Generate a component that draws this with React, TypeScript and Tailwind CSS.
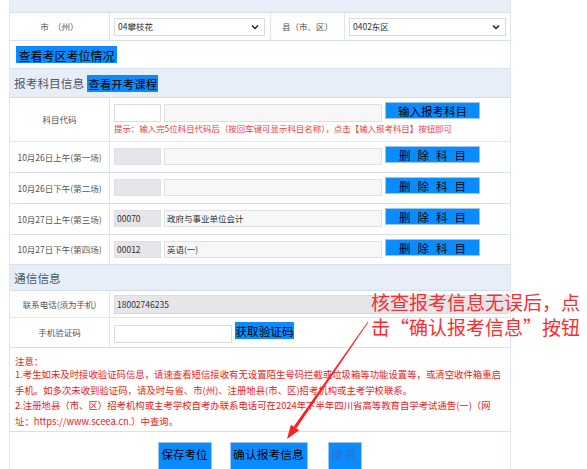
import React from "react";

const BLUE = "bg-[#0a8cff]";

function Chevron() {
  return (
    <svg width="8" height="6" viewBox="0 0 8 6" className="shrink-0">
      <polyline points="1,1.5 4,4.5 7,1.5" fill="none" stroke="#222" strokeWidth="1.5" />
    </svg>
  );
}

function Select({ value, w }: { value: string; w: string }) {
  return (
    <div className={`${w} h-[18px] border border-[#dcdcdc] bg-white flex items-center justify-between pl-[3px] pr-[5px]`}>
      <span className="text-[8.5px] text-[#333] leading-none">{value}</span>
      <Chevron />
    </div>
  );
}

function Label({ children }: { children: React.ReactNode }) {
  return (
    <div className="w-[100px] shrink-0 border-r border-[#dde6f2] flex items-center justify-center text-[8.5px] text-[#555] whitespace-nowrap">
      {children}
    </div>
  );
}

function BlueBtn({ children, cls }: { children: React.ReactNode; cls: string }) {
  return (
    <div className={`${BLUE} ${cls} border border-[#9fc6ee] text-black whitespace-nowrap text-center`}>
      {children}
    </div>
  );
}

function CourseRow({ label, code, name, h }: { label: string; code: string; name: string; h: string }) {
  return (
    <div className={`flex ${h} border-b border-[#d6e1ef]`}>
      <Label>{label}</Label>
      <div className="flex items-start pl-[4px] pt-[4px] gap-[3px]">
        <div className="mt-[2px] w-[47px] h-[17px] bg-[#e6e6ea] border border-[#e0e0e4] flex items-center pl-[2px] text-[8.5px] text-[#333]">{code}</div>
        <div className="mt-[2px] w-[218px] h-[17px] bg-[#f7f7f7] border border-[#e0e0e0] flex items-center pl-[2px] text-[8.5px] text-[#333]">{name}</div>
        <BlueBtn cls="w-[95px] h-[17px] text-[11.5px] leading-[14px] pt-[1px] tracking-[7px] pl-[7px]">删除科目</BlueBtn>
      </div>
    </div>
  );
}

export default function App() {
  return (
    <div className="relative w-[587px] h-[469px] overflow-hidden bg-white font-['Noto_Sans_CJK_SC',sans-serif]">
      <div className="ml-[9px] w-[502px] border-l border-r border-[#dfe7f2]">
        {/* top strip */}
        <div className="h-[13px] bg-[#e9eff8] border-b border-[#d6e1ef]" />
        {/* row 1 */}
        <div className="flex h-[28px] border-b border-[#d6e1ef]">
          <Label>市　（州）</Label>
          <div className="w-[161px] shrink-0 border-r border-[#dde6f2] flex items-center pl-[4px]">
            <Select value="04攀枝花" w="w-[151px]" />
          </div>
          <div className="w-[74px] shrink-0 border-r border-[#dde6f2] flex items-center justify-center text-[8.5px] text-[#555]">县（市、区）</div>
          <div className="flex-1 flex items-center pl-[4px]">
            <Select value="0402东区" w="w-[157px]" />
          </div>
        </div>
        {/* row 2 */}
        <div className="flex items-center h-[28px] border-b border-[#d6e1ef] pl-[6px]">
          <div className={`${BLUE} h-[17px] w-[101px] text-[12px] leading-[15px] pt-[2px] text-black text-center whitespace-nowrap`}>查看考区考位情况</div>
        </div>
        {/* section header */}
        <div className="flex items-center h-[29px] bg-[#e8eef7] border-b border-[#d0deef] pl-[4px] gap-[3px]">
          <span className="text-[11.7px] text-[#4a5a6c] leading-none">报考科目信息</span>
          <div className={`${BLUE} h-[17px] w-[71px] text-[11.5px] leading-[15px] pt-[2px] text-black text-center whitespace-nowrap`}>查看开考课程</div>
        </div>
        {/* 科目代码 */}
        <div className="flex h-[44px] border-b border-[#e3e8ef]">
          <Label>科目代码</Label>
          <div className="flex flex-col pl-[4px] pt-[4px]">
            <div className="flex items-start gap-[3px]">
              <div className="mt-[2px] w-[47px] h-[18px] bg-white border border-[#dcdcdc]" />
              <div className="mt-[2px] w-[218px] h-[18px] bg-[#f7f7f7] border border-[#e0e0e0]" />
              <BlueBtn cls="w-[95px] h-[17px] text-[11.5px] leading-[14px] pt-[1px]">输入报考科目</BlueBtn>
            </div>
            <div className="mt-[1px] text-[8.45px] leading-[10px] text-[#f23a3a] whitespace-nowrap">
              提示：输入完5位科目代码后（按回车键可显示科目名称），点击【输入报考科目】按钮即可
            </div>
          </div>
        </div>
        <CourseRow label="10月26日上午(第一场)" code="" name="" h="h-[31px]" />
        <CourseRow label="10月26日下午(第二场)" code="" name="" h="h-[31px]" />
        <CourseRow label="10月27日上午(第三场)" code="00070" name="政府与事业单位会计" h="h-[31px]" />
        <CourseRow label="10月27日下午(第四场)" code="00012" name="英语(一)" h="h-[30px]" />
        {/* 通信信息 */}
        <div className="flex items-center h-[26px] bg-[#e8eef7] border-b border-[#d0deef] pl-[4px]">
          <span className="text-[11.7px] text-[#4a5a6c] leading-none">通信信息</span>
        </div>
        <div className="flex h-[27px] border-b border-[#e3e8ef]">
          <Label>联系电话(须为手机)</Label>
          <div className="flex-1 flex items-center pl-[4px] pr-[1px]">
            <div className="flex-1 h-[19px] bg-[#e6e6ea] border border-[#dadade] flex items-center pl-[2px] text-[8.5px] text-[#333]">18002746235</div>
          </div>
        </div>
        <div className="flex h-[30px] border-b border-[#d6e1ef]">
          <Label>手机验证码</Label>
          <div className="flex items-start pl-[4px] gap-[3px]">
            <div className="mt-[7px] w-[118px] h-[18px] bg-white border border-[#dcdcdc]" />
            <div className={`${BLUE} mt-[4px] w-[59px] h-[17px] text-[11.6px] leading-[15px] pt-[2px] text-black text-center whitespace-nowrap`}>获取验证码</div>
          </div>
        </div>
        {/* notes */}
        <div className="h-[84px] border-b border-[#d6e1ef] pl-[5px] pt-[7px] text-[9.4px] text-[#f01818] whitespace-nowrap">
          <div className="leading-[12px]">注意：</div>
          <div className="leading-[15.5px]">1.考生如未及时接收验证码信息，请速查看短信接收有无设置陌生号码拦截或垃圾箱等功能设置等，或清空收件箱重启</div>
          <div className="leading-[15.5px]">手机。如多次未收到验证码，请及时与省、市(州)、注册地县(市、区)招考机构或主考学校联系。</div>
          <div className="leading-[15.5px]">2.注册地县（市、区）招考机构或主考学校自考办联系电话可在2024年下半年四川省高等教育自学考试通告(一)（网</div>
          <div className="leading-[15.5px]">址：https://www.sceea.cn.）中查询。</div>
        </div>
        {/* buttons */}
        <div className="flex justify-center items-start pt-[10px] h-[40px] gap-[18px] pr-[1px]">
          <BlueBtn cls="w-[54px] h-[28px] text-[11.5px] leading-[22px]">保存考位</BlueBtn>
          <BlueBtn cls="w-[78px] h-[28px] text-[11.8px] leading-[22px]">确认报考信息</BlueBtn>
          <div className={`${BLUE} ml-[2px] w-[34px] h-[28px] border border-[#9fc6ee] text-[11.5px] leading-[22px] text-[#2f72c6] text-center whitespace-nowrap`}>缴 费</div>
        </div>
      </div>

      {/* annotation */}
      <div className="absolute left-[371px] top-[289px] text-[19px] leading-[25px] text-[#ff2b2b] whitespace-nowrap">
        <div>核查报考信息无误后，点</div>
        <div>击“确认报考信息”按钮</div>
      </div>
      <svg className="absolute left-0 top-0 pointer-events-none" width="587" height="469" viewBox="0 0 587 469">
        <polygon points="368.3,322.2 367.7,321.8 293.8,426.6 296.2,428.4" fill="#ff1e1e" />
        <polygon points="299.1,430.3 290.9,424.7 287,439" fill="#ff1e1e" />
      </svg>
    </div>
  );
}
